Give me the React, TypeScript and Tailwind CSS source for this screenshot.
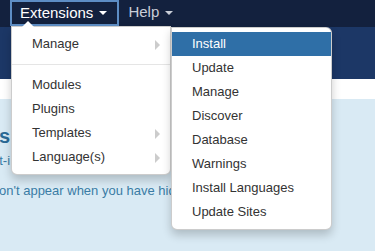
import { ReactNode } from "react";

const font = { fontFamily: '"Liberation Sans", Arial, sans-serif' };

function Caret({ color }: { color: string }) {
    return (
        <span
            className="ml-[6px] inline-block h-0 w-0 align-middle border-x-[4px] border-x-transparent border-t-[4px]"
            style={{ borderTopColor: color }}
        />
    );
}

function SubArrow() {
    return (
        <span className="absolute right-[10px] top-[8px] h-0 w-0 border-y-[5px] border-y-transparent border-l-[5px] border-l-[#cccccc]" />
    );
}

function Item({ children, sub, active }: { children: ReactNode; sub?: boolean; active?: boolean }) {
    return (
        <div
            className={`relative h-[24px] pl-[20px] text-[13px] leading-[24px] ${
                active ? "bg-[#2f6fa7] text-white" : "text-[#333333]"
            }`}
        >
            {children}
            {sub && <SubArrow />}
        </div>
    );
}

export default function App() {
    return (
        <div className="relative h-[251px] w-[375px] overflow-hidden bg-[#d9eaf4]" style={font}>
            {/* navbar */}
            <div className="flex h-[27px] items-start bg-[#13213e] pl-[10px]">
                <div className="flex h-[26px] items-center border-2 border-[#5d8dc4] pl-[8px] pr-[10px] text-[15px] text-white">
                    Extensions
                    <Caret color="#ffffff" />
                </div>
                <div className="ml-[9px] flex h-[25px] items-center text-[15px] text-[#c9ced8]">
                    Help
                    <Caret color="#c9ced8" />
                </div>
            </div>
            <div className="h-[52px] bg-[#1c3766]" />
            <div className="h-[20px] bg-white" />

            {/* page content behind menus */}
            <div className="pt-[25px]">
                <div className="-ml-[12px] text-[20px] font-bold leading-[24px] text-[#2b6a96]">es</div>
                <div className="mt-[3px] -ml-[8px] text-[13px] leading-[20px] text-[#3a7ca5]">nt-i</div>
                <div className="mt-[10px] -ml-[1px] whitespace-nowrap text-[13px] leading-[20px] text-[#3a7ca5]">
                    on't appear when you have hidden the menu
                </div>
            </div>

            {/* Extensions dropdown */}
            <div className="absolute left-[11px] top-[26px] w-[160px] rounded-b-[6px] border border-black/20 bg-white pt-[5px] pb-[5px] shadow-[0_5px_10px_rgba(0,0,0,0.2)]">
                <span className="absolute -top-[6px] left-[10px] h-0 w-0 border-x-[6px] border-x-transparent border-b-[6px] border-b-white" />
                <Item sub>Manage</Item>
                <div className="my-[8px] h-px bg-[#e5e5e5]" />
                <Item>Modules</Item>
                <Item>Plugins</Item>
                <Item sub>Templates</Item>
                <Item sub>Language(s)</Item>
            </div>

            {/* Manage submenu */}
            <div className="absolute left-[171px] top-[27px] w-[161px] rounded-b-[6px] rounded-tr-[6px] border border-black/20 bg-white pt-[4px] pb-[5px] shadow-[0_5px_10px_rgba(0,0,0,0.2)]">
                <Item active>Install</Item>
                <Item>Update</Item>
                <Item>Manage</Item>
                <Item>Discover</Item>
                <Item>Database</Item>
                <Item>Warnings</Item>
                <Item>Install Languages</Item>
                <Item>Update Sites</Item>
            </div>
        </div>
    );
}
